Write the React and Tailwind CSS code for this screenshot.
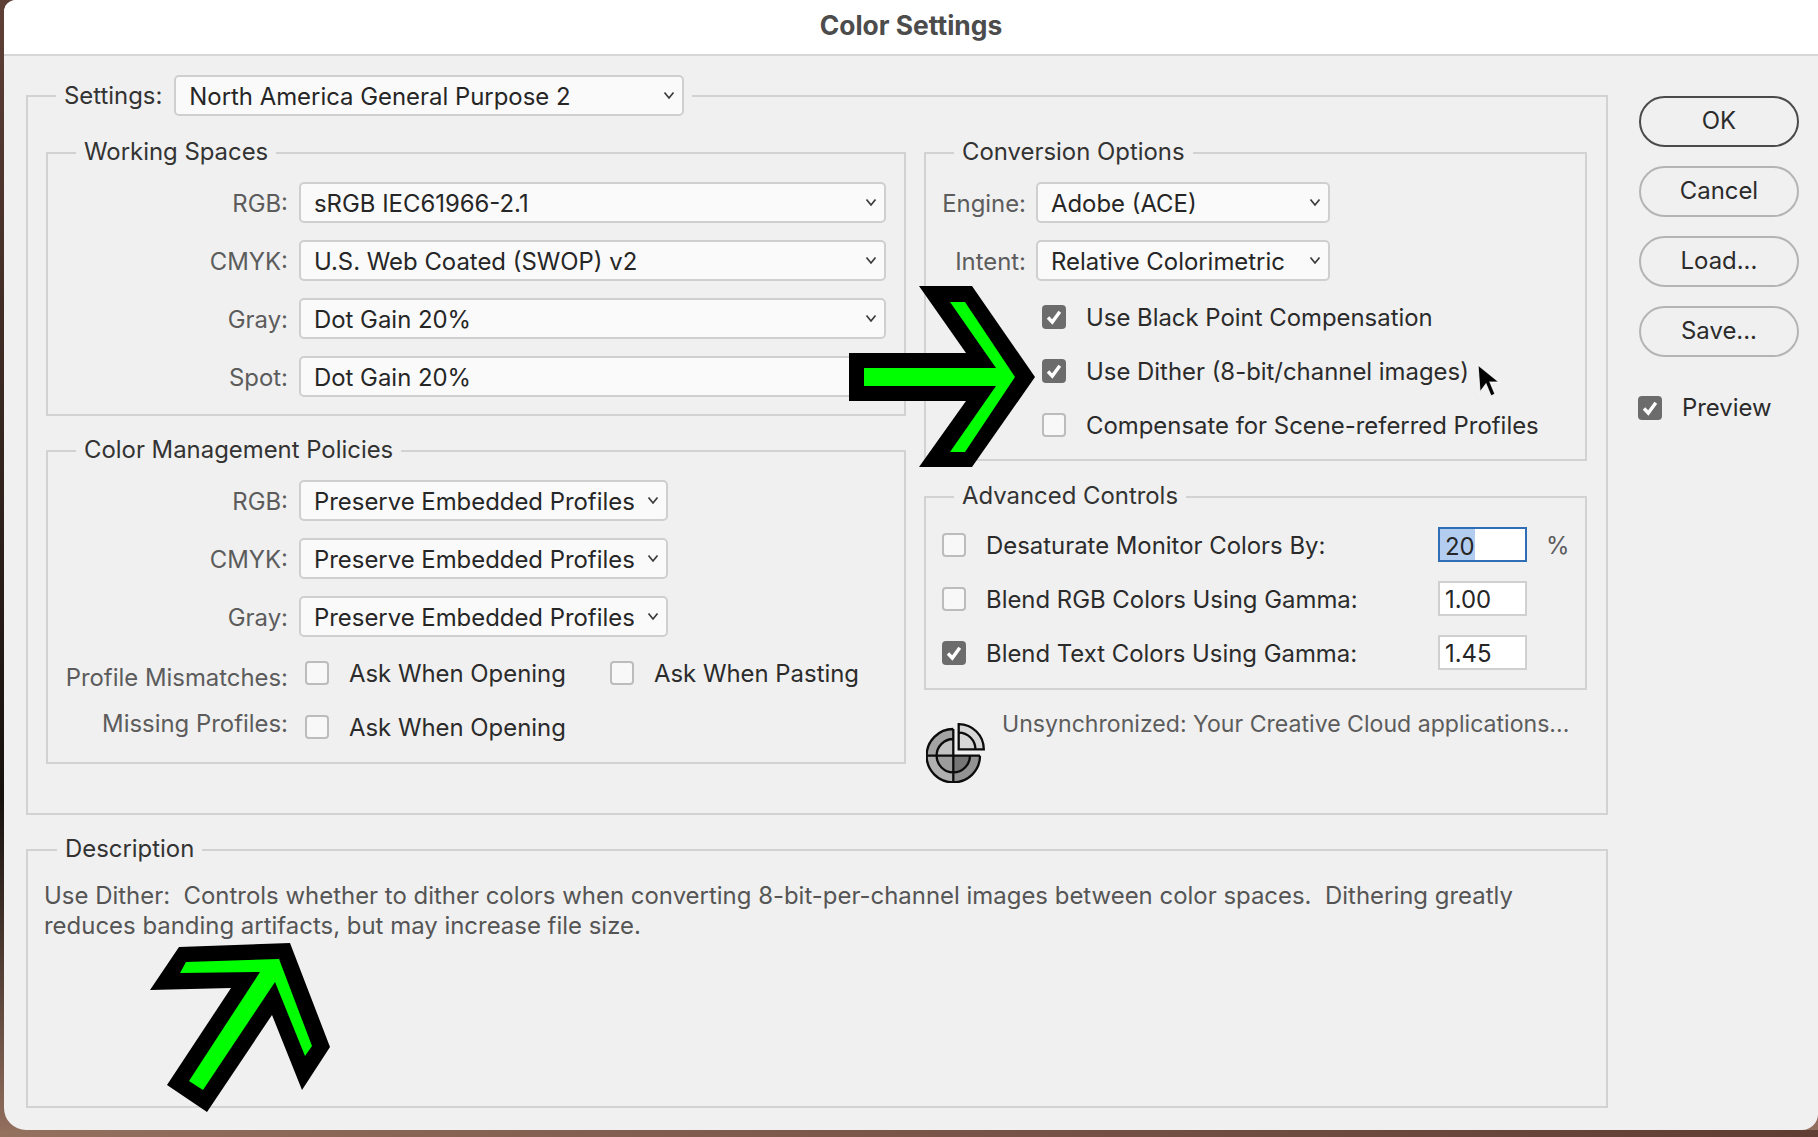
const sans = "font-['Inter',sans-serif]";

function Chevron() {
  return (
    <svg width="12" height="9" viewBox="0 0 12 9" className="shrink-0">
      <path d="M1.5 1.5 L6 7 L10.5 1.5" fill="none" stroke="#3a3a3a" strokeWidth="1.7" />
    </svg>
  );
}

function Select({ value, className }) {
  return (
    <div className={`h-[41px] shrink-0 flex items-center justify-between pl-[13px] pr-[7px] bg-[#fafafa] border-2 border-[#cfcfcf] rounded-[5px] text-[#262626] ${className}`}>
      <span className="mt-[2px]">{value}</span>
      <Chevron />
    </div>
  );
}

function Checkbox({ checked }) {
  if (checked) {
    return (
      <div className="w-[24px] h-[24px] shrink-0 rounded-[4px] bg-[#6c6c6c]">
        <svg width="24" height="24" viewBox="0 0 24 24">
          <path d="M6 12.5 L10.3 17 L17.8 6.8" fill="none" stroke="#fff" strokeWidth="3.4" />
        </svg>
      </div>
    );
  }
  return <div className="w-[24px] h-[24px] shrink-0 rounded-[4px] bg-[#f8f8f8] border-2 border-[#bcbcbc]" />;
}

function Group({ title, className, legendClass = "ml-[28px]", children }) {
  return (
    <fieldset className={`border-2 border-[#d2d2d2] ${className}`}>
      <legend className={`px-[8px] h-[30px] leading-[28px] text-[#333] ${legendClass}`}>{title}</legend>
      {children}
    </fieldset>
  );
}

function SelectRow({ label, value, selectClass }) {
  return (
    <div className="flex items-center gap-[11px]">
      <span className="w-[240px] mt-[2px] text-right text-[#5c5c5c]">{label}</span>
      <Select value={value} className={selectClass} />
    </div>
  );
}

function CheckRow({ checked, label }) {
  return (
    <div className="flex items-center h-[24px]">
      <Checkbox checked={checked} />
      <span className="ml-[20px] mt-[1px] text-[#2b2b2b]">{label}</span>
    </div>
  );
}

function GammaRow({ checked, label, value, focused }) {
  return (
    <div className="flex items-center h-[35px]">
      <Checkbox checked={checked} />
      <span className="ml-[20px] mt-[2px] w-[452px] text-[#2b2b2b]">{label}</span>
      <div className={`w-[89px] h-[35px] flex items-center pl-[5px] bg-white border-2 text-[#262626] ${focused ? "border-[#2f6eb4]" : "border-[#d0d0d0]"}`}>
        <span className={focused ? "bg-[#b3cdf0] h-[31px] leading-[35px] -ml-[5px] pl-[5px]" : "mt-[2px]"}>{value}</span>
      </div>
      {focused && <span className="ml-[19px] mt-[2px] text-[#5c5c5c]">%</span>}
    </div>
  );
}

function Button({ label, primary }) {
  return (
    <div className={`h-[51px] w-[160px] rounded-full border-2 flex items-center justify-center text-[#2b2b2b] ${primary ? "border-[#4a4a4a]" : "border-[#b4b4b4]"}`}>
      <span className="-mt-[1px]">{label}</span>
    </div>
  );
}

function SyncIcon() {
  return (
    <svg width="60" height="60" viewBox="0 0 60 60" className="shrink-0 mt-[14px] ml-[2px]">
      <path d="M27.3 32.7 V6 A26.7 26.7 0 0 0 0.6 32.7 Z" fill="#a4a4a4" />
      <path d="M27.3 32.7 H0.6 A26.7 26.7 0 0 0 27.3 59.4 Z" fill="#b0b0b0" />
      <path d="M27.3 32.7 V59.4 A26.7 26.7 0 0 0 54 32.7 Z" fill="#929292" />
      <path d="M27.3 32.7 V16 A16.7 16.7 0 0 0 10.6 32.7 Z" fill="#c2c2c2" />
      <path d="M27.3 32.7 H10.6 A16.7 16.7 0 0 0 27.3 49.4 Z" fill="#9c9c9c" />
      <path d="M27.3 32.7 V49.4 A16.7 16.7 0 0 0 44 32.7 Z" fill="#767676" />
      <path d="M27.3 6 A26.7 26.7 0 1 0 54 32.7 M27.3 16 A16.7 16.7 0 1 0 44 32.7 M27.3 6 V59.4 M0.6 32.7 H54" fill="none" stroke="#0c0c0c" strokeWidth="2.3" />
      <path d="M32.7 26.3 V1.2 A25.1 25.1 0 0 1 57.8 26.3 Z" fill="#d6d6d6" stroke="#0c0c0c" strokeWidth="2.3" />
      <path d="M32.7 9.6 A16.7 16.7 0 0 1 49.4 26.3" fill="none" stroke="#0c0c0c" strokeWidth="2.3" />
    </svg>
  );
}

export default function App() {
  return (
    <div className={`relative w-[1818px] h-[1137px] overflow-hidden pl-[4px] bg-linear-to-b from-[#5f4036] via-[#17110e] via-70% to-[#94705f] ${sans} text-[23.9px]`}>
      <div className="h-[1130px] bg-[#f0f0f0] rounded-tl-[12px] rounded-bl-[22px] rounded-br-[16px] overflow-hidden">
        <div className="h-[56px] flex items-center justify-center bg-white border-b-2 border-[#d6d6d6] font-bold text-[26.4px] text-[#4c4c4c]">
          <span className="-mt-[3px]">Color Settings</span>
        </div>
        <div className="flex pl-[22px] pt-[19px]">
          <div className="w-[1582px]">
            <fieldset className="border-2 border-[#d2d2d2] px-[18px] pb-[30px]">
              <legend className="ml-[10px] px-[8px] flex items-center gap-[12px] h-[41px]">
                <span className="mt-[1px] text-[#333]">Settings:</span>
                <Select value="North America General Purpose 2" className="w-[510px]" />
              </legend>
              <div className="flex gap-[18px] pt-[22px]">
                <div className="w-[860px] flex flex-col gap-[20px]">
                  <Group title="Working Spaces" className="pb-[17px]">
                    <div className="flex flex-col gap-[17px] pt-[14px]">
                      <SelectRow label="RGB:" value="sRGB IEC61966-2.1" selectClass="w-[587px]" />
                      <SelectRow label="CMYK:" value="U.S. Web Coated (SWOP) v2" selectClass="w-[587px]" />
                      <SelectRow label="Gray:" value="Dot Gain 20%" selectClass="w-[587px]" />
                      <SelectRow label="Spot:" value="Dot Gain 20%" selectClass="w-[587px]" />
                    </div>
                  </Group>
                  <Group title="Color Management Policies" className="pb-[23px]">
                    <div className="flex flex-col gap-[17px] pt-[14px]">
                      <SelectRow label="RGB:" value="Preserve Embedded Profiles" selectClass="w-[369px]" />
                      <SelectRow label="CMYK:" value="Preserve Embedded Profiles" selectClass="w-[369px]" />
                      <SelectRow label="Gray:" value="Preserve Embedded Profiles" selectClass="w-[369px]" />
                    </div>
                    <div className="flex items-start h-[24px] mt-[24px]">
                      <span className="w-[240px] h-[24px] leading-[24px] mt-[5px] text-right text-[#5c5c5c]">Profile Mismatches:</span>
                      <div className="ml-[17px] w-[305px] flex items-center h-[24px]">
                        <Checkbox />
                        <span className="ml-[20px] mt-[2px] text-[#2b2b2b]">Ask When Opening</span>
                      </div>
                      <div className="flex items-center h-[24px]">
                        <Checkbox />
                        <span className="ml-[20px] mt-[2px] text-[#2b2b2b]">Ask When Pasting</span>
                      </div>
                    </div>
                    <div className="flex items-start h-[24px] mt-[30px]">
                      <span className="w-[240px] h-[24px] leading-[24px] -mt-[3px] text-right text-[#5c5c5c]">Missing Profiles:</span>
                      <div className="ml-[17px] flex items-center h-[24px]">
                        <Checkbox />
                        <span className="ml-[20px] mt-[2px] text-[#2b2b2b]">Ask When Opening</span>
                      </div>
                    </div>
                  </Group>
                </div>
                <div className="w-[663px]">
                  <Group title="Conversion Options" className="pb-[22px]">
                    <div className="flex flex-col gap-[17px] pt-[14px]">
                      <div className="flex items-center gap-[10px]">
                        <span className="w-[100px] mt-[2px] text-right text-[#5c5c5c]">Engine:</span>
                        <Select value="Adobe (ACE)" className="w-[294px]" />
                      </div>
                      <div className="flex items-center gap-[10px]">
                        <span className="w-[100px] mt-[2px] text-right text-[#5c5c5c]">Intent:</span>
                        <Select value="Relative Colorimetric" className="w-[294px]" />
                      </div>
                    </div>
                    <div className="flex flex-col gap-[30px] pl-[116px] mt-[24px]">
                      <CheckRow checked label="Use Black Point Compensation" />
                      <CheckRow checked label="Use Dither (8-bit/channel images)" />
                      <CheckRow label="Compensate for Scene-referred Profiles" />
                    </div>
                  </Group>
                  <Group title="Advanced Controls" className="mt-[21px] pb-[18px]">
                    <div className="flex flex-col gap-[19px] pt-[15px] pl-[16px]">
                      <GammaRow focused label="Desaturate Monitor Colors By:" value="20" />
                      <GammaRow label="Blend RGB Colors Using Gamma:" value="1.00" />
                      <GammaRow checked label="Blend Text Colors Using Gamma:" value="1.45" />
                    </div>
                  </Group>
                  <div className="flex gap-[16px] mt-[19px]">
                    <SyncIcon />
                    <span className="text-[23.1px] text-[#5c5c5c] leading-[30px] whitespace-nowrap">Unsynchronized: Your Creative Cloud applications...</span>
                  </div>
                </div>
              </div>
            </fieldset>
            <Group title="Description" legendClass="ml-[13px]" className="mt-[20px] pb-[165px] px-[16px]">
              <p className="pt-[16px] leading-[30px] text-[23.94px] text-[#555] whitespace-pre-wrap">
                {"Use Dither:  Controls whether to dither colors when converting 8-bit-per-channel images between color spaces.  Dithering greatly\nreduces banding artifacts, but may increase file size."}
              </p>
            </Group>
          </div>
          <div className="ml-[31px] pt-[21px] flex flex-col gap-[19px]">
            <Button primary label="OK" />
            <Button label="Cancel" />
            <Button label="Load..." />
            <Button label="Save..." />
            <div className="flex items-center mt-[14px] -ml-[1px]">
              <Checkbox checked />
              <span className="ml-[20px] text-[#2b2b2b]">Preview</span>
            </div>
          </div>
        </div>
      </div>
      <div className="h-[7px] -ml-[4px] bg-linear-to-r from-[#94705f] to-[#5f3d33]" />

      <svg width="1818" height="1137" viewBox="0 0 1818 1137" className="absolute inset-0 pointer-events-none">
        <polygon fill="#000" points="919,286 972,286 1035,377 972,467 919,467 966,401 849,401 849,353 966,353" />
        <polygon fill="#00ff00" points="950,302 965,302 1015,377 965,452 950,452 996,386 864,386 864,368 996,368" />
        <polygon fill="#000" points="179,947 290,943 330,1047 302,1090 272,1015 207,1112 167,1085 231,988 150,990" />
        <polygon fill="#00ff00" points="186,962 279,959 312,1046 305,1056 275,982 203,1090 189,1081 260,972 180,973" />
        <path d="M1478 365 L1480 392 L1486 384 L1491 396 L1495 394 L1490 382 L1499 382 Z" fill="#000" stroke="#fff" strokeWidth="1.2" strokeOpacity="0.8" />
      </svg>
    </div>
  );
}
